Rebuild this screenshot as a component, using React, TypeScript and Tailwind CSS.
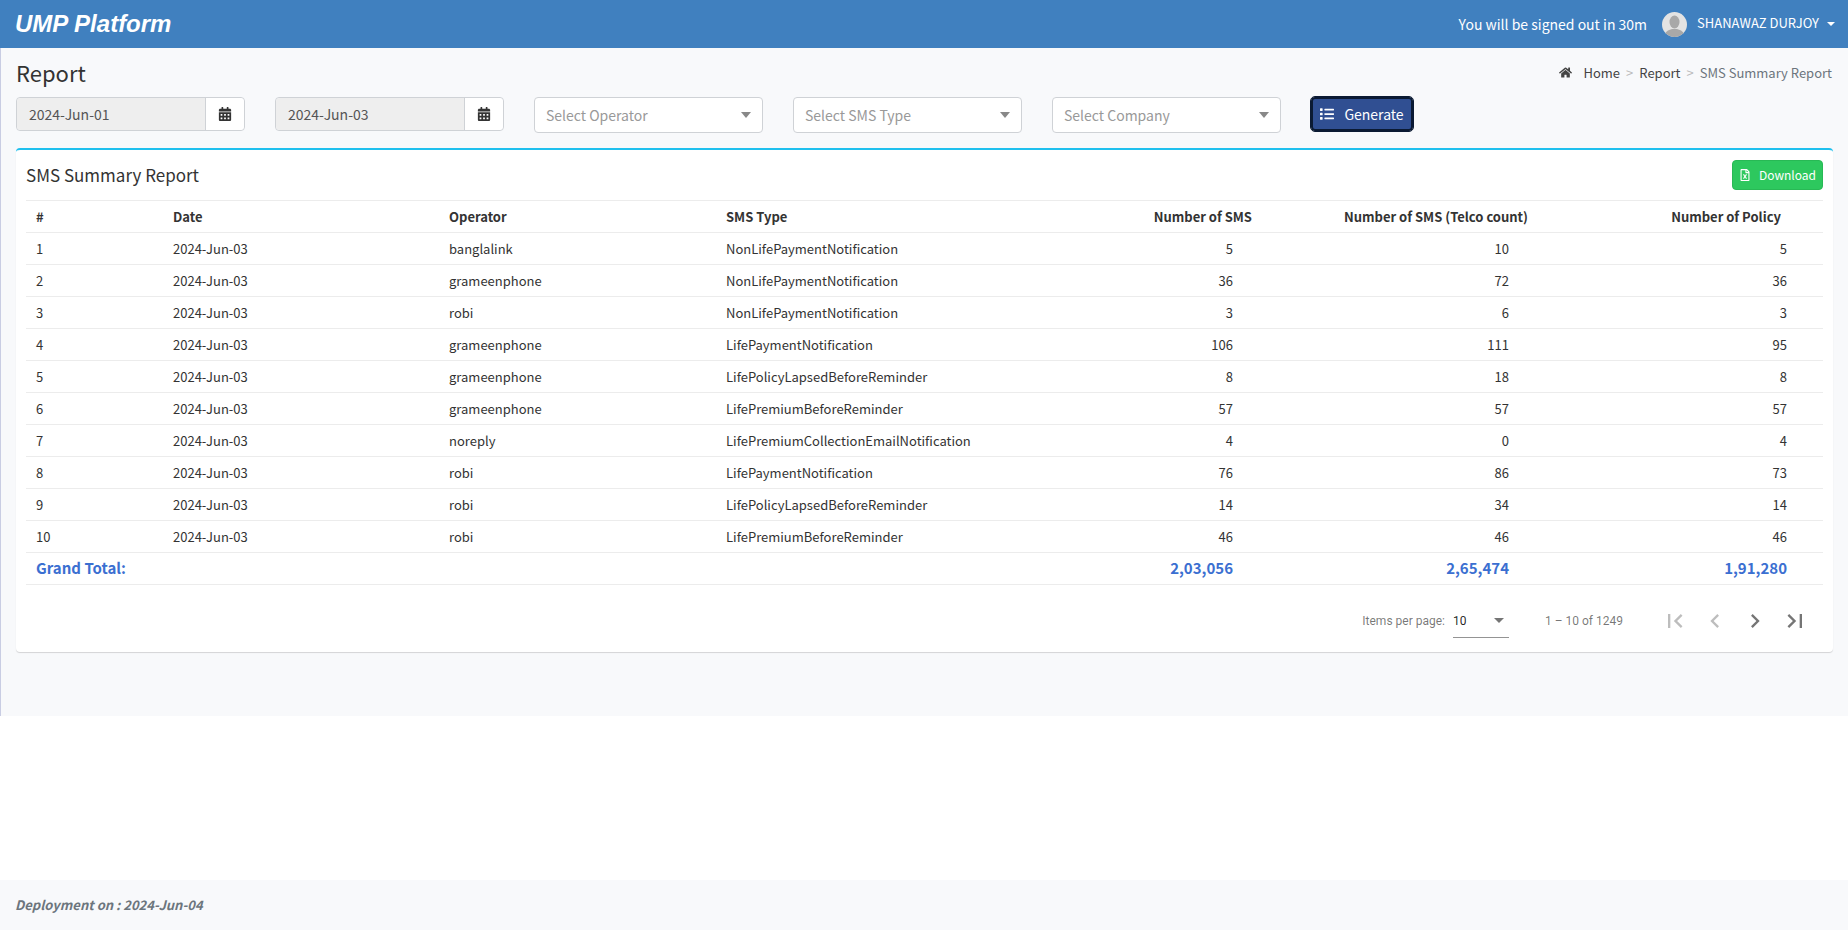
import React from "react";
import { FaCalendarAlt, FaHome, FaList, FaRegFileExcel } from "react-icons/fa";

const font = "font-['Noto_Sans_CJK_SC','Noto_Sans',sans-serif]";

const rows: [number, string, string, number, number, number][] = [
  [1, "banglalink", "NonLifePaymentNotification", 5, 10, 5],
  [2, "grameenphone", "NonLifePaymentNotification", 36, 72, 36],
  [3, "robi", "NonLifePaymentNotification", 3, 6, 3],
  [4, "grameenphone", "LifePaymentNotification", 106, 111, 95],
  [5, "grameenphone", "LifePolicyLapsedBeforeReminder", 8, 18, 8],
  [6, "grameenphone", "LifePremiumBeforeReminder", 57, 57, 57],
  [7, "noreply", "LifePremiumCollectionEmailNotification", 4, 0, 4],
  [8, "robi", "LifePaymentNotification", 76, 86, 73],
  [9, "robi", "LifePolicyLapsedBeforeReminder", 14, 34, 14],
  [10, "robi", "LifePremiumBeforeReminder", 46, 46, 46],
];

function DateBox({ value }: { value: string }) {
  return (
    <div className="flex h-[34px] w-[229px] shrink-0 rounded border border-[#cfd2d6]">
      <div className="flex flex-1 items-center rounded-l bg-[#eeeeee] pl-3 text-[14px] text-[#555]">{value}</div>
      <div className="flex w-[39px] items-center justify-center rounded-r border-l border-[#cfd2d6] bg-white text-[#333]">
        <FaCalendarAlt size={14} />
      </div>
    </div>
  );
}

function SelectBox({ label }: { label: string }) {
  return (
    <div className="flex h-[36px] w-[229px] shrink-0 items-center justify-between rounded border border-[#cfd2d6] bg-white pl-[11px] pr-[11px] text-[14px] text-[#999]">
      <span>{label}</span>
      <span className="h-0 w-0 border-x-[5px] border-t-[6px] border-x-transparent border-t-[#888]" />
    </div>
  );
}

function PagerIcon({ d, dim }: { d: string; dim?: boolean }) {
  return (
    <div className="flex h-10 w-10 items-center justify-center">
      <svg width="28" height="28" viewBox="0 0 24 24" fill={dim ? "rgba(0,0,0,0.26)" : "rgba(0,0,0,0.54)"}>
        <path d={d} />
      </svg>
    </div>
  );
}

export default function App() {
  return (
    <div className={`flex h-[930px] flex-col bg-white text-[#333] ${font}`}>
      <header className="flex h-12 shrink-0 items-center justify-between bg-[#4080bf] pl-[15px] pr-[13px] text-white">
        <div className="font-['Liberation_Sans',sans-serif] text-[24px] font-bold italic">UMP Platform</div>
        <div className="flex items-center text-[14px]">
          <span className="mr-[15px]">You will be signed out in 30m</span>
          <svg width="25" height="25" viewBox="0 0 25 25" className="mr-[10px]">
            <defs>
              <clipPath id="av"><circle cx="12.5" cy="12.5" r="12.5" /></clipPath>
            </defs>
            <g clipPath="url(#av)">
              <rect width="25" height="25" fill="#e3e3e3" />
              <ellipse cx="12.5" cy="10" rx="5" ry="6.5" fill="#a8a8a8" />
              <path d="M2 26c0-6 4-8 8-9h5c4 1 8 3 8 9z" fill="#a8a8a8" />
            </g>
          </svg>
          <span className="mb-[2px] text-[13px]">SHANAWAZ DURJOY</span>
          <span className="ml-[8px] h-0 w-0 border-x-[4px] border-t-[4px] border-x-transparent border-t-white" />
        </div>
      </header>

      <main className="flex h-[668px] shrink-0 flex-col border-l border-[#c9cde3] bg-[#f8f9fb] pl-[15px] pr-[15px]">
        <div className="flex h-[49px] shrink-0 items-center justify-between">
          <h1 className="text-[22px] font-normal">Report</h1>
          <div className="flex items-center pr-[1px] text-[13px] text-[#444]">
            <FaHome size={13} className="mr-[11px]" />
            <span>Home</span>
            <span className="mx-[6px] text-[#bbb]">&gt;</span>
            <span>Report</span>
            <span className="mx-[6px] text-[#bbb]">&gt;</span>
            <span className="text-[#6c757d]">SMS Summary Report</span>
          </div>
        </div>

        <div className="flex shrink-0 items-start gap-[30px]">
          <DateBox value="2024-Jun-01" />
          <DateBox value="2024-Jun-03" />
          <SelectBox label="Select Operator" />
          <SelectBox label="Select SMS Type" />
          <SelectBox label="Select Company" />
          <button className="flex h-[34px] w-[102px] items-center justify-center gap-[10px] rounded border-2 border-[#0b1a33] bg-[#304f92] text-[14px] text-white outline-1 outline-[#0b1a33] ring-1 ring-white">
            <FaList size={14} />
            Generate
          </button>
        </div>

        <section className="mt-[15px] h-[504px] shrink-0 rounded border-t-2 border-[#1fc0ee] bg-white px-[10px] shadow-[0_1px_1px_rgba(0,0,0,0.15)]">
          <div className="flex h-[50px] items-center justify-between">
            <h2 className="text-[17px] font-normal">SMS Summary Report</h2>
            <button className="flex h-[30px] w-[91px] items-center justify-center gap-[8px] rounded border border-[#28b955] bg-[#2dc85e] text-[12px] text-white">
              <FaRegFileExcel size={12} />
              Download
            </button>
          </div>

          <table className="w-full table-fixed border-collapse text-[13px]">
            <colgroup>
              <col className="w-[137px]" />
              <col className="w-[276px]" />
              <col className="w-[277px]" />
              <col className="w-[553px]" />
              <col className="w-[276px]" />
              <col />
            </colgroup>
            <thead>
              <tr className="h-8 border-y border-[#ececec] font-semibold">
                <th className="pl-[10px] text-left font-semibold">#</th>
                <th className="pl-[10px] text-left font-semibold">Date</th>
                <th className="pl-[10px] text-left font-semibold">Operator</th>
                <th className="pl-[10px] text-left font-semibold">
                  <div className="flex justify-between">
                    <span>SMS Type</span>
                    <span className="pr-[17px]">Number of SMS</span>
                  </div>
                </th>
                <th className="pr-[17px] text-right font-semibold">Number of SMS (Telco count)</th>
                <th className="pr-[42px] text-right font-semibold">Number of Policy</th>
              </tr>
            </thead>
            <tbody>
              {rows.map((r) => (
                <tr key={r[0]} className="h-8 border-b border-[#ececec]">
                  <td className="pl-[10px]">{r[0]}</td>
                  <td className="pl-[10px]">2024-Jun-03</td>
                  <td className="pl-[10px]">{r[1]}</td>
                  <td className="pl-[10px]">
                    <div className="flex justify-between">
                      <span>{r[2]}</span>
                      <span className="pr-[36px]">{r[3]}</span>
                    </div>
                  </td>
                  <td className="pr-[36px] text-right">{r[4]}</td>
                  <td className="pr-[36px] text-right">{r[5]}</td>
                </tr>
              ))}
              <tr className="h-8 border-b border-[#ececec] text-[15px] font-semibold text-[#3b6fd1]">
                <td colSpan={3} className="pl-[10px]">Grand Total:</td>
                <td className="pr-[36px] text-right">2,03,056</td>
                <td className="pr-[36px] text-right">2,65,474</td>
                <td className="pr-[36px] text-right">1,91,280</td>
              </tr>
            </tbody>
          </table>

          <div className="mt-2 flex h-[56px] items-center justify-end pr-[8px] font-['Roboto',sans-serif] text-[12px] text-[rgba(0,0,0,0.54)]">
            <span className="mr-2">Items per page:</span>
            <div className="mr-[36px] flex h-[34px] w-[56px] items-center justify-between border-b border-[rgba(0,0,0,0.42)] pr-[5px]">
              <span className="text-[rgba(0,0,0,0.87)]">10</span>
              <span className="h-0 w-0 border-x-[5px] border-t-[5px] border-x-transparent border-t-[rgba(0,0,0,0.54)]" />
            </div>
            <span className="mr-[32px]">1 – 10 of 1249</span>
            <PagerIcon dim d="M18.41 16.59L13.82 12l4.59-4.59L17 6l-6 6 6 6zM6 6h2v12H6z" />
            <PagerIcon dim d="M15.41 7.41L14 6l-6 6 6 6 1.41-1.41L10.83 12z" />
            <PagerIcon d="M10 6L8.59 7.41 13.17 12l-4.58 4.59L10 18l6-6z" />
            <PagerIcon d="M5.59 7.41L10.18 12l-4.59 4.59L7 18l6-6-6-6zM16 6h2v12h-2z" />
          </div>
        </section>
      </main>

      <div className="flex-1" />

      <footer className="flex h-[50px] shrink-0 items-center bg-[#f8f9fb] pl-[15px] text-[13px] font-semibold italic text-[#6c757d]">
        Deployment on : 2024-Jun-04
      </footer>
    </div>
  );
}
